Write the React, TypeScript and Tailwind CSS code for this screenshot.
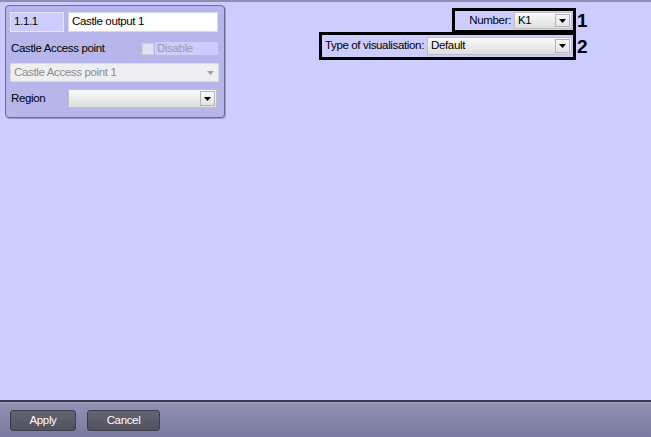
import React from "react";

const font = { fontFamily: '"Liberation Sans", Arial, sans-serif' };

function Arrow({ color = "#000" }: { color?: string }) {
  return (
    <svg width="7" height="4" viewBox="0 0 7 4">
      <path d="M0 0 H7 L3.5 4 Z" fill={color} />
    </svg>
  );
}

function Select({ text, w, h, disabled }: { text: string; w: string; h: string; disabled?: boolean }) {
  return (
    <div
      className={`${w} ${h} shrink-0 flex items-center border ${disabled ? "border-[#d8d8e0] bg-[#efeff2]" : "border-[#c0c0cc] bg-gradient-to-b from-[#fafafa] to-[#dedede]"}`}
    >
      <span className={`flex-1 pl-[3px] whitespace-nowrap text-[11.5px] tracking-[-0.35px] leading-none ${disabled ? "text-[#8c8c8c]" : "text-black"}`}>{text}</span>
      {disabled ? (
        <div className="w-[15px] h-full flex items-center justify-center">
          <Arrow color="#a0a0a0" />
        </div>
      ) : (
        <div className="w-[15px] h-[calc(100%-2px)] mr-[1px] flex items-center justify-center border border-[#b4b4bc] bg-gradient-to-b from-[#f8f8f8] to-[#e4e4e4]">
          <Arrow />
        </div>
      )}
    </div>
  );
}

const txt = "whitespace-nowrap text-[11.5px] tracking-[-0.35px] leading-none";

export default function App() {
  return (
    <div className="w-[651px] h-[437px] flex flex-col bg-[#ccccfe] overflow-hidden" style={font}>
      <div className="h-[2px] bg-[#8e8eb0]" />
      <div className="flex-1 flex">
        <div className="ml-[5px] mt-[3px] w-[220px] h-[113px] rounded-[4px] border border-[#6c6c8e] bg-[#b6b6ea] shadow-[1px_1px_0_#9a9ac8] pl-[4px] pt-[6px]">
          <div className="flex gap-[4px]">
            <div className={`w-[54px] h-[20px] border border-[#e6e6ff] bg-[#ccccff] flex items-center pl-[3px] ${txt}`}>1.1.1</div>
            <div className={`w-[150px] h-[20px] border border-[#d8d8e8] bg-white flex items-center pl-[3px] ${txt}`}>Castle output 1</div>
          </div>
          <div className="flex items-center mt-[10px] h-[13px]">
            <span className={`ml-[1px] w-[131px] ${txt}`}>Castle Access point</span>
            <div className="w-[12px] h-[12px] border border-[#d0d0dc] bg-[#e2e2ec]" />
            <div className={`ml-[1px] w-[63px] h-[13px] bg-[#ccccfe] flex items-center pl-[2px] text-[#9a9aa8] ${txt}`}>Disable</div>
          </div>
          <div className="mt-[8px]">
            <Select text="Castle Access point 1" w="w-[209px]" h="h-[19px]" disabled />
          </div>
          <div className="flex items-center mt-[7px]">
            <span className={`ml-[1px] w-[57px] ${txt}`}>Region</span>
            <Select text="" w="w-[149px]" h="h-[19px]" />
          </div>
        </div>
        <div className="ml-auto mr-[64px] mt-[6px] flex flex-col items-end">
          <div className="flex items-center">
            <div className="w-[124px] h-[25px] border-[3px] border-black flex items-center justify-end pr-[1px]">
              <span className={`mr-[3px] ${txt}`}>Number:</span>
              <Select text="K1" w="w-[58px]" h="h-[17px]" />
            </div>
            <span className="w-[11px] pl-[1px] text-[19px] font-bold leading-none">1</span>
          </div>
          <div className="flex items-center -mt-[1px]">
            <div className="w-[257px] h-[28px] border-[3px] border-black flex items-center justify-end pr-[1px]">
              <span className={`mr-[3px] ${txt}`}>Type of visualisation:</span>
              <Select text="Default" w="w-[145px]" h="h-[18px]" />
            </div>
            <span className="w-[11px] pl-[1px] text-[19px] font-bold leading-none">2</span>
          </div>
        </div>
      </div>
      <div className="h-[2px] bg-[#3a3a52]" />
      <div className="h-[35px] border-t border-[#a4a4c0] bg-gradient-to-b from-[#9292b2] to-[#7a7aa2] flex items-start pt-[7px] pl-[10px] gap-[11px]">
        <button className={`w-[66px] h-[21px] rounded-[3px] border border-[#3c3c4c] bg-gradient-to-b from-[#646474] to-[#50505e] text-white ${txt}`}>Apply</button>
        <button className={`w-[73px] h-[21px] rounded-[3px] border border-[#3c3c4c] bg-gradient-to-b from-[#646474] to-[#50505e] text-white ${txt}`}>Cancel</button>
      </div>
    </div>
  );
}
